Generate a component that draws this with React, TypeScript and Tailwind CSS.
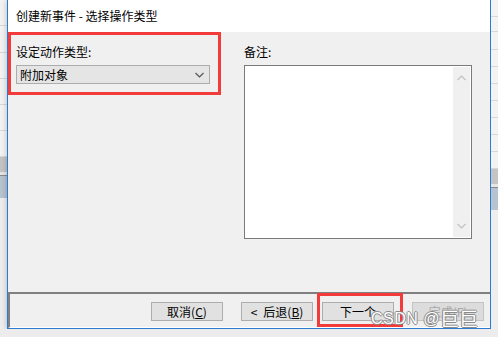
import React from 'react';

const font = 'font-["Microsoft_YaHei","Noto_Sans_CJK_SC",sans-serif]';

// 窗口两侧露出的背景表格
function SideStrip({ side }: { side: 'left' | 'right' }) {
  const rows = side === 'left' ? [26, 27, 26, 26, 26, 26] : [17, 15, 18, 17, 17, 17, 17, 17, 17, 17];
  return (
    <div className="flex w-[7px] flex-col bg-[#f3f3f3]">
      {rows.map((h, i) => (
        <div key={i} style={{ height: h }} className="border-b border-[#d8d8d8]" />
      ))}
      <div className="h-[15px] bg-[#c4c4c4]" />
      <div className="h-[4px] border-b border-[#8a8a8a] bg-[#e6e6e6]" />
      <div className="h-[22px] bg-[#b7c3cf]" />
      <div className="flex-1 bg-[#eeeeee]" />
    </div>
  );
}

function Chevron({ up = false, color = '#555' }: { up?: boolean; color?: string }) {
  return (
    <svg width="9" height="6" viewBox="0 0 9 6" className="block">
      <path d={up ? 'M0.5 5 L4.5 1 L8.5 5' : 'M0.5 1 L4.5 5 L8.5 1'} fill="none" stroke={color} strokeWidth="1.2" />
    </svg>
  );
}

function Button({ children, disabled = false }: { children: React.ReactNode; disabled?: boolean }) {
  return (
    <div
      className={`flex h-[19px] w-[72px] items-center justify-center border text-[12px] leading-none ${
        disabled ? 'border-[#c4c4c4] bg-[#dcdcdc] text-[#a8a8a8]' : 'border-[#adadad] bg-[#e1e1e1] text-black'
      }`}
    >
      {children}
    </div>
  );
}

export default function App() {
  return (
    <div className={`flex h-[337px] w-[498px] flex-col overflow-hidden bg-[#eeeeee] ${font}`}>
      <div className="flex h-[329px]">
        <SideStrip side="left" />

        {/* 对话框 */}
        <div className="flex w-[484px] flex-col border-x border-b border-[#2b7bd3] bg-[#f0f0f0] shadow-[0_0_6px_rgba(0,0,0,0.25)]">
          <div className="flex h-[32px] items-center bg-white pl-[8px] text-[12px] text-black">
            创建新事件 - 选择操作类型
          </div>

          <div className="flex h-[260px]">
            {/* 左侧：动作类型 */}
            <div className="h-[63px] w-[213px] border-[3px] border-[#f23b3b] pl-[5px] pt-[10px]">
              <div className="h-[14px] text-[12px] leading-[14px] text-black">设定动作类型:</div>
              <div className="mt-[6px] flex h-[19px] w-[194px] items-center justify-between border border-[#adadad] bg-[#e5e5e5] pl-[3px] pr-[5px] text-[12px] text-black">
                <span>附加对象</span>
                <Chevron />
              </div>
            </div>

            {/* 右侧：备注 */}
            <div className="ml-[23px] flex flex-col pt-[13px]">
              <div className="h-[14px] text-[12px] leading-[14px] text-black">备注:</div>
              <div className="mt-[6px] flex h-[174px] w-[228px] justify-end border border-[#7a7a7a] bg-white pr-px py-px">
                <div className="flex w-[17px] flex-col items-center justify-between bg-[#f0f0f0] py-[8px]">
                  <Chevron up color="#c2c2c2" />
                  <Chevron color="#c2c2c2" />
                </div>
              </div>
            </div>
          </div>

          {/* 底部按钮栏 */}
          <div className="relative flex flex-1 items-start justify-end border-l-2 border-t-2 border-b border-[#808080] border-b-white pr-[6px] pt-[8px]">
            <div className="flex gap-[18px]">
              <Button>
                取消(<span className="underline">C</span>)
              </Button>
              <div className="flex gap-[9px]">
                <Button>
                  <span className="mr-[6px]">&lt;</span>后退(<span className="underline">B</span>)
                </Button>
                <div className="relative">
                  <Button>下一个</Button>
                  <div className="absolute left-[-5px] top-[-9px] h-[34px] w-[86px] border-[3px] border-[#f23b3b]" />
                </div>
              </div>
              <Button disabled>完成(F)</Button>
            </div>
            {/* 水印 */}
            <div className="absolute left-[361px] top-[14px] flex items-end whitespace-nowrap leading-none text-white [text-shadow:1px_0_0_#8a8a8a,-1px_0_0_#8a8a8a,0_1px_0_#8a8a8a,0_-1px_0_#8a8a8a]">
              <span className="text-[16px] tracking-[0.5px] [font-family:'Liberation_Sans',sans-serif]">CSDN @</span>
              <span className="text-[19px] [font-family:'Noto_Sans_CJK_SC',sans-serif]">巨巨</span>
            </div>
          </div>
        </div>

        <SideStrip side="right" />
      </div>
      <div className="h-[8px] bg-[#ececec]" />
    </div>
  );
}
